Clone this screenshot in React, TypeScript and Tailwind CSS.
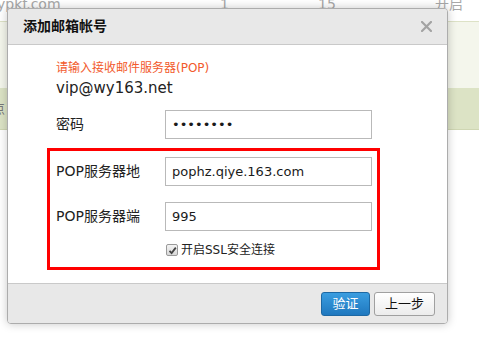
const latin = "font-['DejaVu_Sans','Noto_Sans_CJK_SC',sans-serif]";

const Field = ({ label, value }: { label: string; value: string }) => (
  <div className="flex items-center">
    <div className="w-[109px] text-[14px] text-[#222]">{label}</div>
    <div className="flex h-[29px] w-[207px] items-center border border-[#b9b9b9] bg-white px-[6px] text-[13px] text-[#1a1a1a]">
      {value}
    </div>
  </div>
);

const CloseIcon = () => (
  <svg width="11" height="11" viewBox="0 0 11 11" className="block">
    <path d="M1 1 L10 10 M10 1 L1 10" stroke="#a3a3a3" strokeWidth="2.2" strokeLinecap="square" />
  </svg>
);

const Dialog = () => (
  <div className="absolute left-[7px] top-[8px] flex h-[316px] w-[441px] flex-col overflow-hidden rounded-[4px] border border-[#acacac] bg-white shadow-[0_0_10px_rgba(0,0,0,0.22)]">
    <div className="flex h-[36px] shrink-0 items-center justify-between border-b border-[#c9c9c9] bg-[#e8e8e8] pl-[15px] pr-[15px]">
      <span className="text-[14px] font-bold text-[#111]">添加邮箱帐号</span>
      <CloseIcon />
    </div>

    <div className="flex flex-1 flex-col pl-[48px] pt-[15px]">
      <div className="text-[12px] leading-[16px] text-[#f25a2c]">请输入接收邮件服务器(POP)</div>
      <div className="mt-[2px] text-[15px] leading-[20px] text-[#222]">vip@wy163.net</div>

      <div className="mt-[12px]">
        <Field label="密码" value="••••••••" />
      </div>

      <div className="-ml-[9px] mt-[9px] flex h-[122px] w-[333px] flex-col border-[3px] border-[#ff0000] pl-[6px] pt-[6px]">
        <Field label="POP服务器地" value="pophz.qiye.163.com" />
        <div className="mt-[16px]">
          <Field label="POP服务器端" value="995" />
        </div>
        <div className="ml-[110px] mt-[10px] flex items-center gap-[3px] text-[12px] text-[#222]">
          <span className="flex h-[12px] w-[12px] items-center justify-center rounded-[2px] border border-[#9a9a9a] bg-gradient-to-b from-[#f4f4f4] to-[#d8d8d8]">
            <svg width="9" height="9" viewBox="0 0 9 9">
              <path d="M1.5 4.8 L3.6 7 L7.8 1.6" stroke="#444" strokeWidth="1.8" fill="none" />
            </svg>
          </span>
          <span>开启SSL安全连接</span>
        </div>
      </div>
    </div>

    <div className="flex h-[40px] shrink-0 items-center justify-end gap-[4px] border-t border-[#c9c9c9] bg-[#e8e8e8] pr-[12px]">
      <button className="h-[24px] w-[49px] rounded-[3px] border border-[#1d68a3] bg-gradient-to-b from-[#3a9de0] to-[#1f78bf] text-[13px] text-white">
        验证
      </button>
      <button className="h-[24px] w-[61px] rounded-[3px] border border-[#a0a0a0] bg-gradient-to-b from-white to-[#ececec] text-[13px] text-[#111]">
        上一步
      </button>
    </div>
  </div>
);

export default function App() {
  return (
    <div className={`relative h-[339px] w-[479px] overflow-hidden bg-white ${latin}`}>
      <div className="h-[22px] overflow-hidden border-b border-[#dde2c6]">
        <div className="-ml-[3px] -mt-[6px] flex text-[14px] leading-[20px] text-[#a8a8a8]">
          <span className="w-[223px]">ypkf.com</span>
          <span className="w-[98px]">1</span>
          <span className="w-[117px]">15</span>
          <span>开启</span>
        </div>
      </div>
      <div className="h-[66px] bg-[#f4f6ec]" />
      <div className="flex h-[42px] items-center border-b border-[#cfd6b3] bg-[#dce3c5] text-[13px] text-[#777]">
        <span className="-ml-[8px]">点</span>
      </div>
      <Dialog />
    </div>
  );
}
